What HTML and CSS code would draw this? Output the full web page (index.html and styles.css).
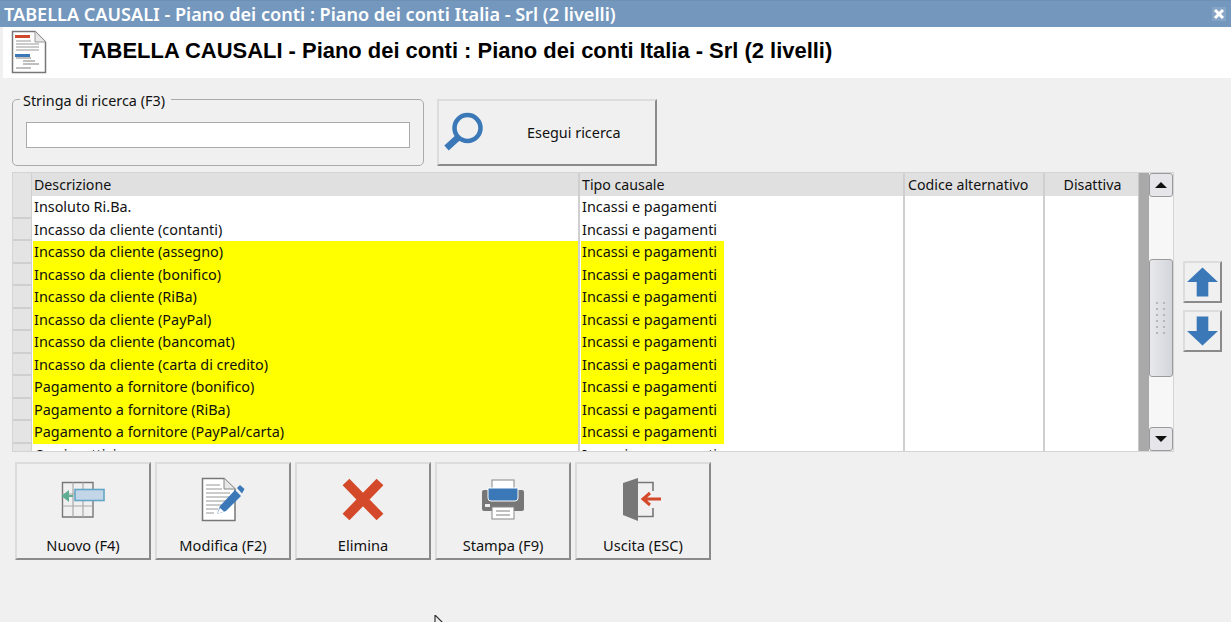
FILE: index.html
```html
<!DOCTYPE html>
<html lang="it">
<head>
<meta charset="utf-8">
<title>TABELLA CAUSALI</title>
<link rel="stylesheet" href="styles.css">
</head>
<body>
<div class="window">
  <div class="titlebar">
    <span class="titlebar-text">TABELLA CAUSALI - Piano dei conti : Piano dei conti Italia - Srl (2 livelli)</span>
    <span class="close"><svg width="12" height="12" viewBox="0 0 12 12"><path d="M2 2L10 10M10 2L2 10" stroke="#fff" stroke-width="3"/></svg></span>
  </div>
  <div class="header">
    <svg class="doc-icon" width="36" height="44" viewBox="0 0 36 44">
      <path d="M1.5 1.5H24L34.5 12V42.5H1.5Z" fill="#fff" stroke="#777" stroke-width="1.5"/>
      <path d="M24 1.5V12H34.5" fill="#e8e8e8" stroke="#999"/>
      <rect x="4" y="5" width="15" height="3" fill="#d0492c"/>
      <path d="M5 11H20M5 14H28M5 17H28M5 20H28" stroke="#bbb" stroke-width="1.4"/>
      <rect x="4" y="24" width="15" height="3" fill="#3b78b8"/>
      <path d="M5 28H20M12 31H24M12 34H28M5 38H20" stroke="#aaa" stroke-width="1.4"/>
    </svg>
    <h1 class="main-title">TABELLA CAUSALI - Piano dei conti : Piano dei conti Italia - Srl (2 livelli)</h1>
  </div>

  <div class="search-row">
    <fieldset class="search-box">
      <legend>Stringa di ricerca (F3)</legend>
      <input class="search-input" type="text">
    </fieldset>
    <button class="btn search-btn" type="button">
      <svg class="search-icon" width="42" height="42" viewBox="0 0 42 42">
        <circle cx="25.5" cy="16" r="13" fill="none" stroke="#3b78b8" stroke-width="4.5"/>
        <path d="M15.5 26L4.5 36" stroke="#3b78b8" stroke-width="6.5"/>
      </svg>
      <span class="search-label">Esegui ricerca</span>
    </button>
  </div>

  <div class="grid-row">
    <div class="grid">
      <div class="columns">
        <div class="row head">
          <div class="ind"></div>
          <div class="cell c1">Descrizione</div>
          <div class="cell c2">Tipo causale</div>
          <div class="cell c3">Codice alternativo</div>
          <div class="cell c4 center">Disattiva</div>
        </div>
        <div class="rows">
          <div class="row"><div class="ind"></div><div class="cell c1">Insoluto Ri.Ba.</div><div class="cell c2">Incassi e pagamenti</div><div class="cell c3"></div><div class="cell c4"></div></div>
          <div class="row"><div class="ind"></div><div class="cell c1">Incasso da cliente (contanti)</div><div class="cell c2">Incassi e pagamenti</div><div class="cell c3"></div><div class="cell c4"></div></div>
          <div class="row hl"><div class="ind"></div><div class="cell c1">Incasso da cliente (assegno)</div><div class="cell c2"><span class="mark">Incassi e pagamenti</span></div><div class="cell c3"></div><div class="cell c4"></div></div>
          <div class="row hl"><div class="ind"></div><div class="cell c1">Incasso da cliente (bonifico)</div><div class="cell c2"><span class="mark">Incassi e pagamenti</span></div><div class="cell c3"></div><div class="cell c4"></div></div>
          <div class="row hl"><div class="ind"></div><div class="cell c1">Incasso da cliente (RiBa)</div><div class="cell c2"><span class="mark">Incassi e pagamenti</span></div><div class="cell c3"></div><div class="cell c4"></div></div>
          <div class="row hl"><div class="ind"></div><div class="cell c1">Incasso da cliente (PayPal)</div><div class="cell c2"><span class="mark">Incassi e pagamenti</span></div><div class="cell c3"></div><div class="cell c4"></div></div>
          <div class="row hl"><div class="ind"></div><div class="cell c1">Incasso da cliente (bancomat)</div><div class="cell c2"><span class="mark">Incassi e pagamenti</span></div><div class="cell c3"></div><div class="cell c4"></div></div>
          <div class="row hl"><div class="ind"></div><div class="cell c1">Incasso da cliente (carta di credito)</div><div class="cell c2"><span class="mark">Incassi e pagamenti</span></div><div class="cell c3"></div><div class="cell c4"></div></div>
          <div class="row hl"><div class="ind"></div><div class="cell c1">Pagamento a fornitore (bonifico)</div><div class="cell c2"><span class="mark">Incassi e pagamenti</span></div><div class="cell c3"></div><div class="cell c4"></div></div>
          <div class="row hl"><div class="ind"></div><div class="cell c1">Pagamento a fornitore (RiBa)</div><div class="cell c2"><span class="mark">Incassi e pagamenti</span></div><div class="cell c3"></div><div class="cell c4"></div></div>
          <div class="row hl"><div class="ind"></div><div class="cell c1">Pagamento a fornitore (PayPal/carta)</div><div class="cell c2"><span class="mark">Incassi e pagamenti</span></div><div class="cell c3"></div><div class="cell c4"></div></div>
          <div class="row"><div class="ind"></div><div class="cell c1">Corrispettivi</div><div class="cell c2">Incassi e pagamenti</div><div class="cell c3"></div><div class="cell c4"></div></div>
        </div>
      </div>
      <div class="gutter"></div>
      <div class="scrollbar">
        <div class="sb-btn"><svg width="12" height="6" viewBox="0 0 12 6"><path d="M6 0L12 6H0Z" fill="#111"/></svg></div>
        <div class="sb-track sb-top"></div>
        <div class="sb-thumb">
          <svg width="12" height="32" viewBox="0 0 12 32"><g fill="#b5b5bb"><rect x="1" y="0" width="2" height="2"/><rect x="8" y="0" width="2" height="2"/><rect x="1" y="6" width="2" height="2"/><rect x="8" y="6" width="2" height="2"/><rect x="1" y="12" width="2" height="2"/><rect x="8" y="12" width="2" height="2"/><rect x="1" y="18" width="2" height="2"/><rect x="8" y="18" width="2" height="2"/><rect x="1" y="24" width="2" height="2"/><rect x="8" y="24" width="2" height="2"/><rect x="1" y="30" width="2" height="2"/><rect x="8" y="30" width="2" height="2"/></g></svg>
        </div>
        <div class="sb-track sb-bottom"></div>
        <div class="sb-btn"><svg width="12" height="6" viewBox="0 0 12 6"><path d="M0 0H12L6 6Z" fill="#111"/></svg></div>
      </div>
    </div>
    <div class="move-btns">
      <button class="btn move-btn" type="button"><svg width="31" height="30" viewBox="0 0 32 30"><path d="M16 0L32 15H22V30H10V15H0Z" fill="#3b78b8"/></svg></button>
      <button class="btn move-btn" type="button"><svg width="31" height="30" viewBox="0 0 32 30"><path d="M10 0H22V15H32L16 30L0 15H10Z" fill="#3b78b8"/></svg></button>
    </div>
  </div>

  <div class="actions">
    <button class="btn action" type="button">
      <svg class="action-icon" width="46" height="46" viewBox="0 0 46 46">
        <path d="M2.5 6.5H33V41H2.5Z" fill="none" stroke="#777" stroke-width="1.4"/>
        <path d="M2.5 30H33M13 6.5V41M23 6.5V41M2.5 18H33" stroke="#aaa" stroke-width="1.2"/>
        <rect x="15" y="13.5" width="29" height="11" fill="#c3d6e8" stroke="#62a5c4" stroke-width="1.6"/>
        <path d="M13 20H6M8 16L3 20L8 24Z" fill="#5fae93" stroke="#5fae93" stroke-width="2"/>
      </svg>
      <span>Nuovo (F4)</span>
    </button>
    <button class="btn action" type="button">
      <svg class="action-icon" width="46" height="46" viewBox="0 0 46 46">
        <path d="M2.5 2.5H24L35 13V44.5H2.5Z" fill="#fff" stroke="#777" stroke-width="1.5"/>
        <path d="M24 2.5V13H35" fill="#e8e8e8" stroke="#888"/>
        <path d="M6 9H20M6 13H22M6 17H30M6 21H30M6 25H28M6 29H22M6 33H18M6 37H14" stroke="#bbb" stroke-width="1.3"/>
        <path d="M17 38L20 30L35 14L41 20L26 35Z" fill="#3b78b8"/>
        <path d="M17 38L20 32L24 35.5Z" fill="#fff"/>
        <path d="M37 12L40 9L44.5 13L42 17.5Z" fill="#3b78b8"/>
      </svg>
      <span>Modifica (F2)</span>
    </button>
    <button class="btn action" type="button">
      <svg class="action-icon" width="46" height="46" viewBox="0 0 46 46">
        <path d="M6 6L40 41M40 6L6 41" stroke="#d4492a" stroke-width="9.5"/>
      </svg>
      <span>Elimina</span>
    </button>
    <button class="btn action" type="button">
      <svg class="action-icon" width="46" height="46" viewBox="0 0 46 46">
        <rect x="12" y="4" width="22" height="12" fill="#fff" stroke="#888"/>
        <path d="M4 14H42Q44 14 44 16V33Q44 35 42 35H4Q2 35 2 33V16Q2 14 4 14Z" fill="#777"/>
        <path d="M8 12H38V22Q38 25 35 25H11Q8 25 8 22Z" fill="#3b78b8" stroke="#fff" stroke-width="1"/>
        <rect x="5" y="28" width="5" height="3" fill="#eee"/>
        <rect x="12" y="31" width="22" height="12" fill="#fff" stroke="#888"/>
        <path d="M16 35H30M16 39H30" stroke="#aaa" stroke-width="1.4"/>
      </svg>
      <span>Stampa (F9)</span>
    </button>
    <button class="btn action" type="button">
      <svg class="action-icon" width="46" height="46" viewBox="0 0 46 46">
        <path d="M17 6.5H33V15M33 32V40.5H17" fill="none" stroke="#777" stroke-width="1.6"/>
        <path d="M3 7L18 2V45L3 39Z" fill="#777"/>
        <path d="M41 23H24M30 17L23 23L30 29" fill="none" stroke="#d4492a" stroke-width="3"/>
      </svg>
      <span>Uscita (ESC)</span>
    </button>
  </div>
  <svg class="cursor" width="12" height="10" viewBox="0 0 12 10"><path d="M1 0V10M1 0L9 8" fill="none" stroke="#333" stroke-width="1.2"/></svg>
</div>
</body>
</html>
```
FILE: styles.css
```css
* { box-sizing: border-box; }
html, body { margin: 0; padding: 0; }
body { width: 1231px; height: 622px; overflow: hidden; background: #f0f0f0; color: #111; font-family: "Noto Sans", "Open Sans", sans-serif; font-size: 14.4px; }
.window { position: relative; width: 1231px; height: 622px; overflow: hidden; }

.titlebar { height: 27px; display: flex; align-items: center; justify-content: space-between; padding: 0 5px 0 4px; background: #7497bd; border-top: 1px solid #6f8fb3; }
.titlebar-text { color: #fff; font-size: 18.1px; font-weight: 600; white-space: nowrap; }
.close { width: 14px; height: 14px; display: flex; align-items: center; justify-content: center; background: #86a5c6; }

.header { height: 51px; margin-left: 3px; background: #fff; display: flex; align-items: center; padding-left: 8px; }
.doc-icon { flex: none; margin-top: -1px; }
.main-title { margin: 0 0 3px 32px; font-family: "Liberation Sans", sans-serif; font-size: 21.94px; font-weight: 700; color: #000; white-space: nowrap; }

.search-row { display: flex; align-items: flex-start; margin: 13px 0 0 12px; height: 81px; }
.search-box { width: 412px; height: 75px; margin: 0; padding: 15px 13px 0 13px; border: 1px solid #aaa; border-radius: 5px; }
.search-box legend { position: relative; top: 2px; padding: 0 6px 0 3px; margin-left: -6px; line-height: 16px; font-size: 14.4px; }
.search-input { display: block; width: 384px; height: 26px; background: #fff; border: 1px solid #aaa; outline: 0; padding: 0; }

.btn { background: #f0f0f0; color: #111; font: inherit; padding: 0; border: 2px solid; border-color: #dcdcdc #8a8a8a #8a8a8a #dcdcdc; }
.search-btn { position: relative; width: 220px; height: 67px; margin: 8px 0 0 13px; display: flex; align-items: center; }
.search-icon { flex: none; margin-left: 3px; }
.search-label { position: absolute; left: 88px; top: 23px; line-height: 18px; white-space: nowrap; }

.grid-row { display: flex; margin: 0 0 0 12px; align-items: flex-start; }
.grid { width: 1162px; height: 280px; display: flex; background: #fff; border: 1px solid #d4d4d4; }
.columns { width: 1125px; height: 278px; overflow: hidden; flex: none; }
.rows { height: 255px; overflow: hidden; }
.row { display: flex; height: 22.5px; line-height: 21px; font-size: 14.4px; }
.row.head { height: 23px; line-height: 23px; font-size: 14.2px; background: #e0e0e0; }
.ind { width: 19px; flex: none; background: #e4e4e4; border-right: 1px solid #d0d0d0; border-bottom: 2px solid #cfcfcf; }
.head .ind { border-bottom: 0; }
.cell { flex: none; padding-left: 2px; border-right: 2px solid #cfcfcf; white-space: nowrap; overflow: hidden; }
.c1 { width: 548px; }
.c2 { width: 325px; }
.c3 { width: 140px; padding-left: 3px; }
.c4 { width: 93px; border-right: 0; }
.center { text-align: center; }
.hl .c1 { background: #ff0; margin-left: 1px; width: 547px; padding-left: 1px; }
.mark { display: block; width: 143px; height: 100%; background: #ff0; margin-left: -1px; padding-left: 1px; }

.gutter { width: 11px; flex: none; background: #a9a9a9; border-left: 1px solid #c8c8c8; }
.scrollbar { width: 24px; flex: none; display: flex; flex-direction: column; background: #f8f8f8; }
.sb-btn { height: 24px; display: flex; align-items: center; justify-content: center; background: #e6e6ea; border: 1px solid #9a9a9a; border-radius: 3px; flex: none; }
.sb-track { background: #f7f7f7; flex: none; }
.sb-top { height: 62px; }
.sb-bottom { height: 50px; }
.sb-thumb { height: 118px; flex: none; display: flex; align-items: center; justify-content: center; background: linear-gradient(to right, #e8e8ec, #d4d6dc); border: 1px solid #9a9a9a; border-radius: 3px; }

.move-btns { display: flex; flex-direction: column; gap: 7px; margin: 89px 0 0 9px; }
.move-btn { width: 39px; height: 42px; display: flex; align-items: center; justify-content: center; }

.actions { display: flex; gap: 4px; margin: 10px 0 0 15px; }
.action { width: 136px; height: 98px; display: flex; flex-direction: column; align-items: center; font-size: 14.6px; }
.action-icon { height: 46px; margin-top: 12px; flex: none; }
.action span { margin-top: 14px; line-height: 18px; white-space: nowrap; }

.cursor { position: absolute; left: 434px; top: 615px; }
```
